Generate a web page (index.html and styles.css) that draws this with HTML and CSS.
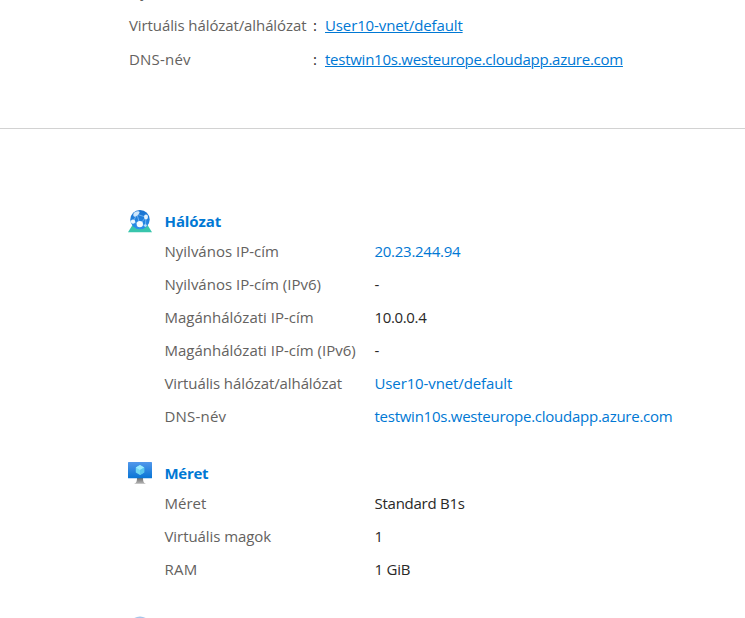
FILE: index.html
```html
<!DOCTYPE html>
<html lang="hu">
<head>
<meta charset="utf-8">
<title>Virtuális gép</title>
<link rel="stylesheet" href="styles.css">
</head>
<body>
<section class="essentials">
  <div class="essential"><span class="label">Nyilvános IP-cím</span></div>
  <div class="essential"><span class="label wide">Virtuális hálózat/alhálózat</span><span class="colon">:</span><span><a class="link vnet">User10-vnet/default</a></span></div>
  <div class="essential"><span class="label dns">DNS-név</span><span class="colon">:</span><span><a class="link host">testwin10s.westeurope.cloudapp.azure.com</a></span></div>
</section>
<main class="properties">
  <section class="group network">
    <svg class="icon" viewBox="0 0 24 24">
      <defs><linearGradient id="globe" x1="0" y1="0" x2="0" y2="1"><stop offset="0" stop-color="#1870ce"/><stop offset="1" stop-color="#2b91ec"/></linearGradient></defs>
      <path d="M4.500 16h15L24 23.300H0z" fill="#38c5ac"/>
      <circle cx="12" cy="10.600" r="9.700" fill="url(#globe)"/>
      <path d="M9 5.300 5 12.800 11.800 15.200 18 8.200 9 5.300 11.800 15.200 17.400 16.600 18 8.200" fill="none" stroke="#9dd0fa" stroke-width=".6"/>
      <path d="M6.300 3.500c2.200-1.500 5-1.700 5.300-.4.300 1.500-2.800 4.300-4.700 4.600-1.900.2-2.100-2.900-.6-4.200z" fill="#cfe7fb"/>
      <ellipse cx="18" cy="8" rx="2" ry="2.400" fill="#e4f2fd"/>
      <circle cx="5" cy="12.600" r="2.200" fill="#edf7ff"/>
      <circle cx="11.800" cy="15.100" r="3.200" fill="#f6fbff"/>
      <circle cx="17.400" cy="16.600" r="1.400" fill="#b9defa"/>
    </svg>
    <div class="details">
      <h2>Hálózat</h2>
      <dl>
        <dt>Nyilvános IP-cím</dt><dd class="blue ip">20.23.244.94</dd>
        <dt>Nyilvános IP-cím (IPv6)</dt><dd>-</dd>
        <dt>Magánhálózati IP-cím</dt><dd class="local">10.0.0.4</dd>
        <dt>Magánhálózati IP-cím (IPv6)</dt><dd>-</dd>
        <dt class="wide">Virtuális hálózat/alhálózat</dt><dd class="blue vnet">User10-vnet/default</dd>
        <dt class="dns">DNS-név</dt><dd class="blue host">testwin10s.westeurope.cloudapp.azure.com</dd>
      </dl>
    </div>
  </section>
  <section class="group size">
    <svg class="icon" viewBox="0 0 24 24">
      <defs><linearGradient id="screen" x1="0" y1="0" x2="0" y2="1"><stop offset="0" stop-color="#5297eb"/><stop offset="1" stop-color="#0875d5"/></linearGradient><linearGradient id="stand" x1="0" y1="0" x2="0" y2="1"><stop offset="0" stop-color="#707070"/><stop offset="1" stop-color="#b5b5b5"/></linearGradient></defs>
      <path d="M9 17h6c0 3 .4 5 3 5.800H6c2.600-.8 3-2.800 3-5.800z" fill="url(#stand)"/>
      <rect y="1" width="24" height="16.300" rx=".6" fill="url(#screen)"/>
      <path d="m12 4 4.200 2.500v5L12 14l-4.200-2.500v-5z" fill="#72d8f2"/>
      <path d="m12 4 4.200 2.500L12 9 7.800 6.500z" fill="#9bebff"/>
      <path d="m12 9 4.200-2.500v5L12 14z" fill="#59c6ed"/>
    </svg>
    <div class="details">
      <h2 class="narrow">Méret</h2>
      <dl>
        <dt>Méret</dt><dd class="sku">Standard B1s</dd>
        <dt class="cores">Virtuális magok</dt><dd>1</dd>
        <dt class="dns">RAM</dt><dd class="ram">1 GiB</dd>
      </dl>
    </div>
  </section>
  <section class="group next">
    <svg class="icon" viewBox="0 0 24 24"><circle cx="12" cy="12" r="11.500" fill="#a7c6ea"/></svg>
  </section>
</main>
</body>
</html>
```
FILE: styles.css
```css
* { box-sizing: border-box; }
body {
  margin: 0;
  height: 618px;
  overflow: hidden;
  background: #fff;
  color: #292827;
  font: 15px/20px "Open Sans", "Noto Sans", sans-serif;
  white-space: nowrap;
}
.essentials {
  height: 129px;
  padding-left: 129px;
  overflow: hidden;
  border-bottom: 1px solid #d2d2d2;
}
.essential {
  display: grid;
  grid-template-columns: 184px 12px 1fr;
  height: 34px;
}
.essential:first-child { margin-top: -19px; }
.label, dt { color: #646260; }
.wide { letter-spacing: -0.1px; }
.dns { letter-spacing: 0.2px; }
.cores { letter-spacing: -0.07px; }
.ip { letter-spacing: -0.27px; }
.vnet { letter-spacing: -0.12px; }
.host { letter-spacing: -0.255px; }
.local { letter-spacing: -0.35px; }
.sku { letter-spacing: -0.25px; }
.ram { letter-spacing: -0.2px; }
.link {
  color: #0078d4;
  text-decoration: underline;
  text-decoration-thickness: 1px;
  text-underline-offset: 1px;
}
.properties { padding: 82px 0 0 128px; }
.group { display: flex; }
.icon { width: 24px; height: 24px; flex: none; margin-top: -2px; }
.details { margin-left: 12.5px; }
.size { margin-top: 30px; }
h2 {
  margin: 0 0 4px;
  color: #0078d4;
  font-size: 15px;
  line-height: 20px;
  font-weight: 700;
  letter-spacing: -0.1px;
}
.narrow { letter-spacing: -0.3px; }
dl { display: grid; grid-template-columns: 210px auto; grid-auto-rows: 33px; line-height: 33px; margin: 0; }
dd { margin: 0; }
.blue { color: #0078d4; }
.next { margin-top: 32px; }
```
